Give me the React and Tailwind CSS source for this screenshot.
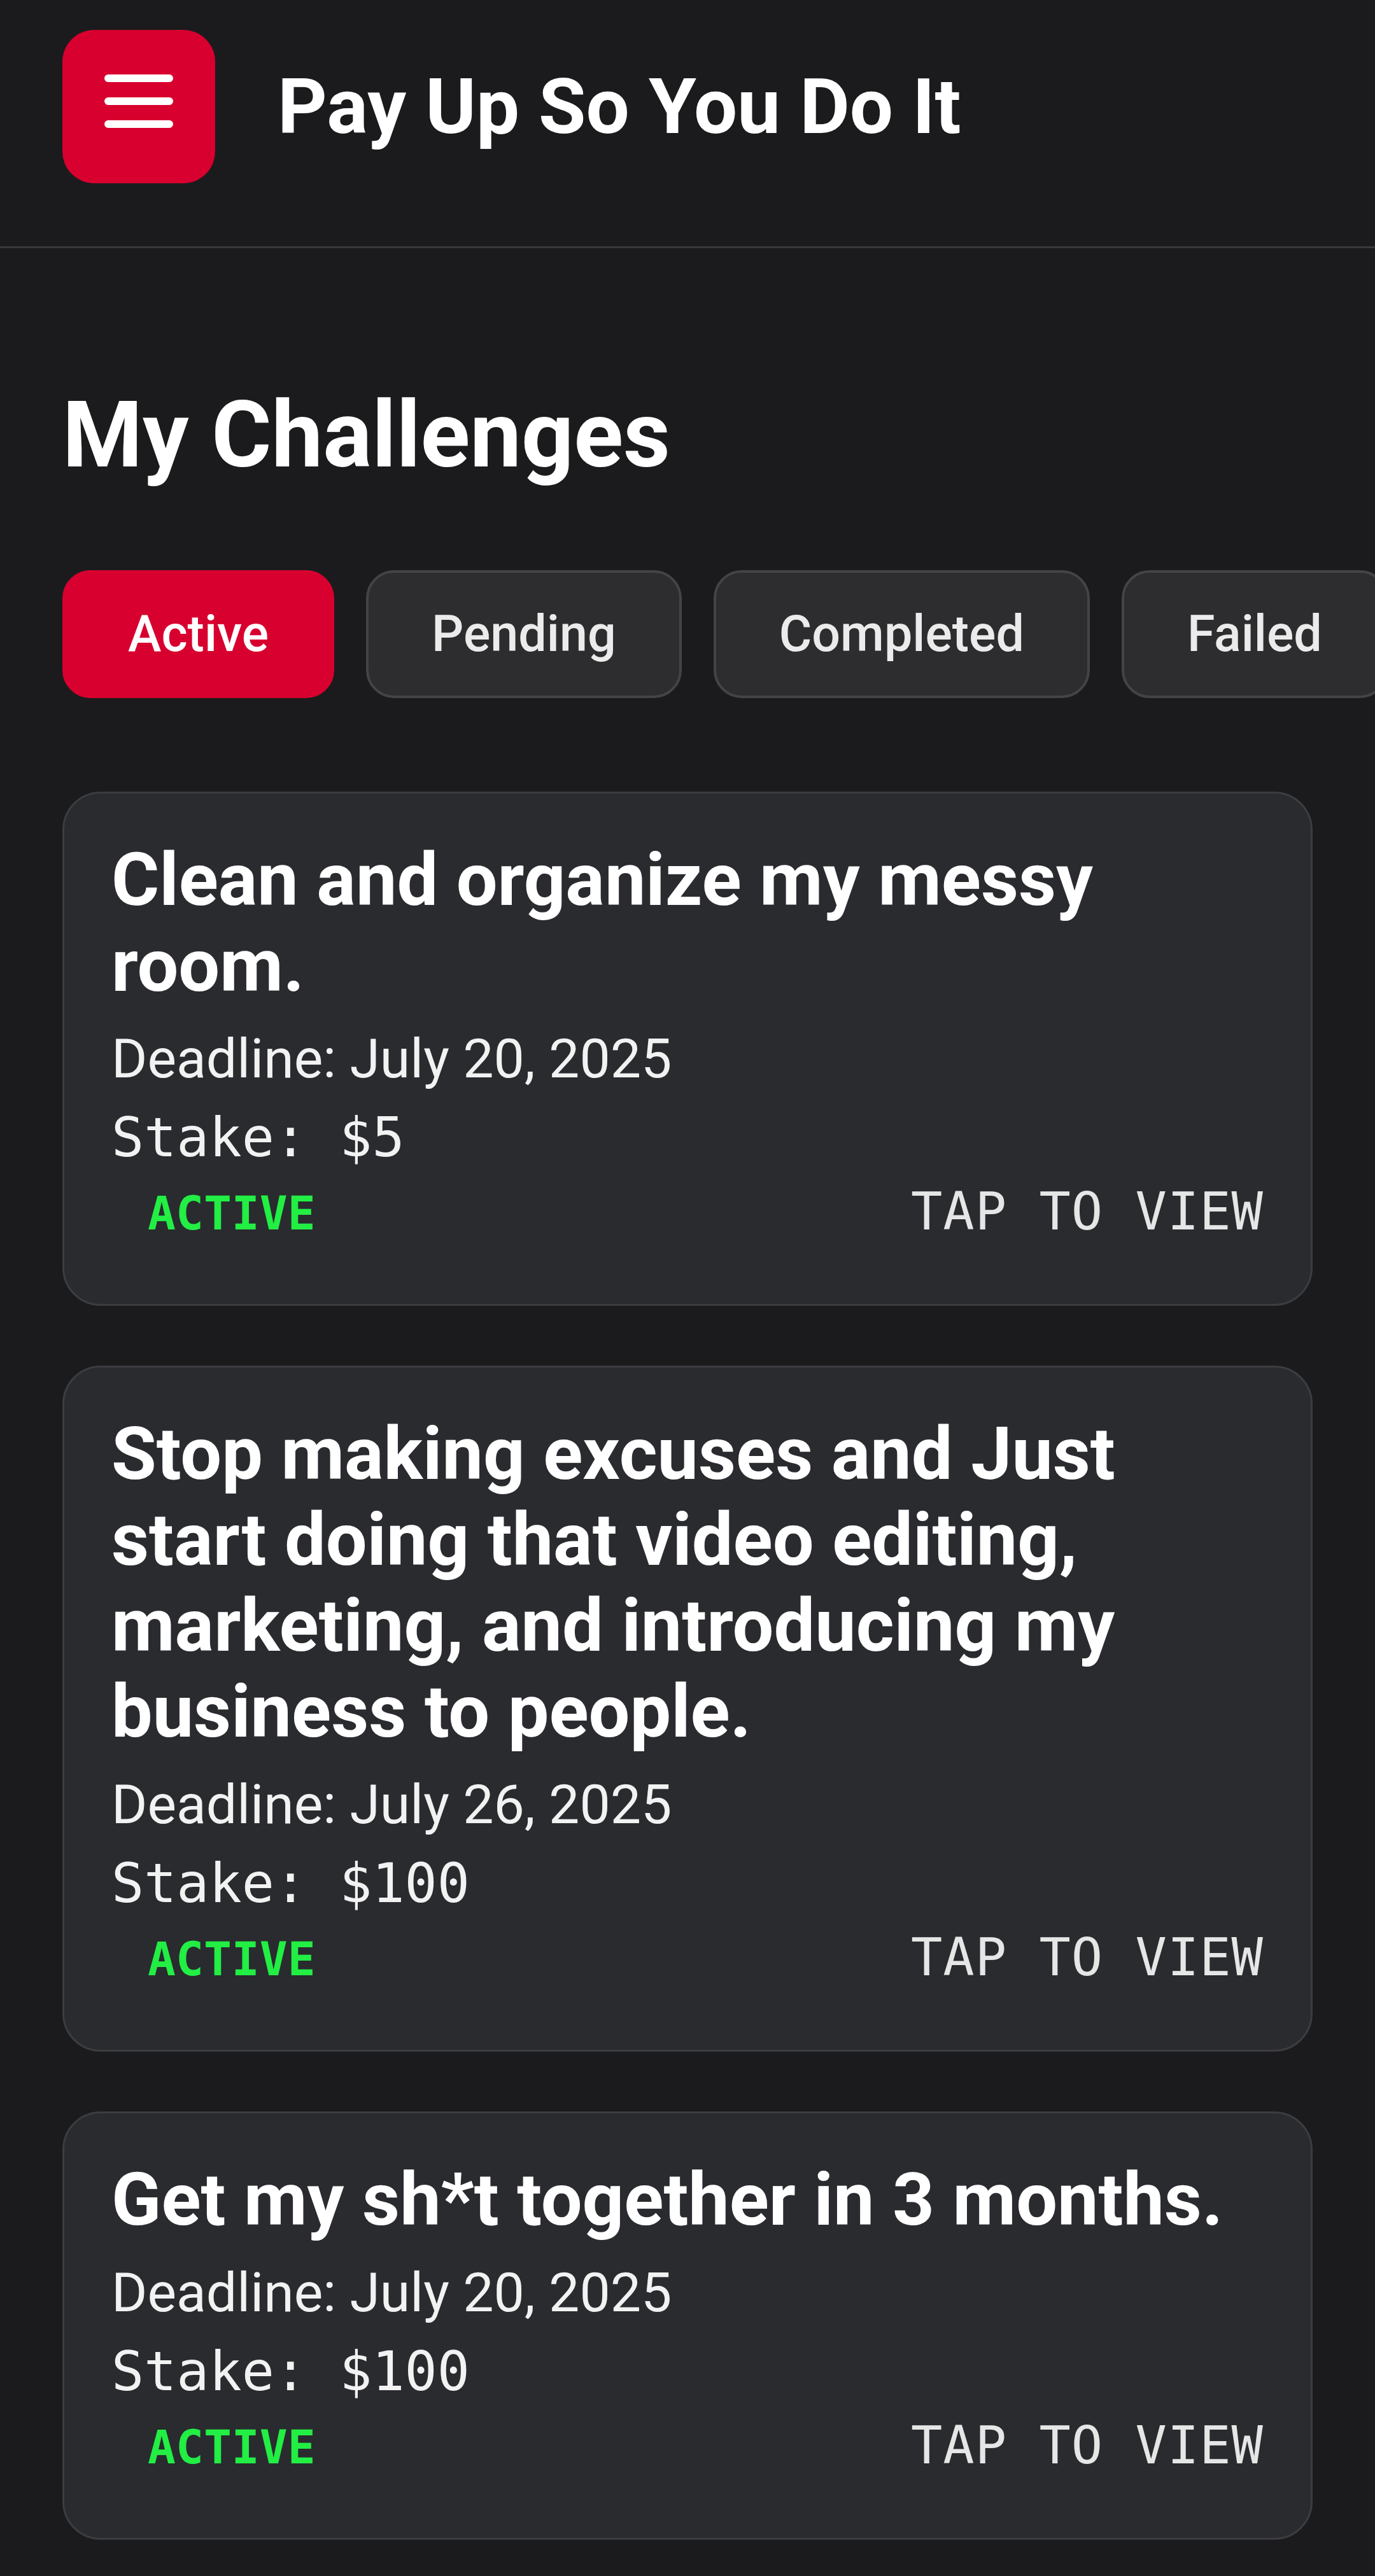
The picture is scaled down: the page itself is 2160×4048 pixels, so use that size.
const challenges = [
  {
    title: "Clean and organize my messy room.",
    deadline: "July 20, 2025",
    stake: "$5",
  },
  {
    title:
      "Stop making excuses and Just start doing that video editing, marketing, and introducing my business to people.",
    deadline: "July 26, 2025",
    stake: "$100",
  },
  {
    title: "Get my sh*t together in 3 months.",
    deadline: "July 20, 2025",
    stake: "$100",
  },
];

const tabs = ["Active", "Pending", "Completed", "Failed"];

const mono = { fontFamily: '"DejaVu Sans Mono", "Liberation Mono", monospace' };

const ChallengeCard = ({ title, deadline, stake }) => (
  <div className="bg-[#292b2f] border-[3px] border-[#3b3d41] rounded-[60px] px-[74px] pt-[68px] pb-[92px]">
    <h2 className="text-[115px] leading-[135px] font-bold text-white">{title}</h2>
    <p className="mt-[30px] text-[86px] leading-[98px] text-[#f2f2f2]">
      Deadline: {deadline}
    </p>
    <p
      className="mt-[25px] text-[85px] leading-[100px] text-[#f2f2f2]"
      style={mono}
    >
      Stake: {stake}
    </p>
    <div className="mt-[16px] flex items-baseline justify-between leading-[100px]" style={mono}>
      <span className="pl-[57px] text-[73px] font-bold text-[#22ee44]">ACTIVE</span>
      <span className="text-[82px] tracking-[1px] text-[#e6e6e6]">TAP TO VIEW</span>
    </div>
  </div>
);

const App = () => {
  return (
    <div
      className="min-h-screen bg-[#1b1b1d] text-white"
      style={{ fontFamily: 'Roboto, "Noto Sans", "Liberation Sans", sans-serif' }}
    >
      <header className="flex items-center px-[98px] pt-[47px] pb-[99px] border-b-[3px] border-[#38383b]">
        <button className="w-[240px] h-[241px] shrink-0 rounded-[50px] bg-[#d7002f] flex flex-col items-center justify-center gap-[24px] pb-[18px]">
          <span className="block w-[108px] h-[12px] rounded-full bg-white" />
          <span className="block w-[108px] h-[12px] rounded-full bg-white" />
          <span className="block w-[108px] h-[12px] rounded-full bg-white" />
        </button>
        <h1 className="ml-[98px] text-[121px] leading-[140px] font-bold text-white">
          Pay Up So You Do It
        </h1>
      </header>

      <main className="px-[98px] pb-[60px]">
        <h2 className="mt-[204px] text-[144px] leading-[180px] font-bold text-white">
          My Challenges
        </h2>

        <div className="mt-[122px] -mr-[98px] flex gap-[50px] overflow-hidden">
          {tabs.map((tab, i) => (
            <div
              key={tab}
              className={
                i === 0
                  ? "shrink-0 h-[201px] px-[99px] flex items-center rounded-[44px] border-[4px] border-[#d7002f] bg-[#d7002f] text-white text-[79px] font-medium"
                  : "shrink-0 h-[201px] px-[99px] flex items-center rounded-[44px] border-[4px] border-[#444447] bg-[#2d2d2f] text-[#ebebeb] text-[79px] font-medium"
              }
            >
              {tab}
            </div>
          ))}
        </div>

        <div className="mt-[147px] flex flex-col gap-[94px]">
          {challenges.map((c) => (
            <ChallengeCard key={c.title} {...c} />
          ))}
        </div>
      </main>
    </div>
  );
};

export default App;
